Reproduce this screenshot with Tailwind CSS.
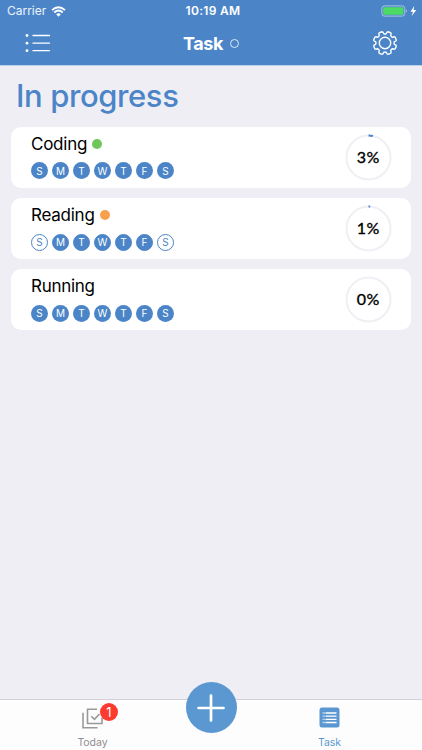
<!DOCTYPE html>
<html lang="en">
<head>
<meta charset="utf-8">
<title>Task</title>
<script src="https://cdn.jsdelivr.net/npm/@tailwindcss/browser@4"></script>
</head>
<body class="w-[422px] h-[750px] overflow-hidden bg-[#efeef5] font-[Inter,'Liberation_Sans',sans-serif] flex flex-col">
<header class="h-[65px] shrink-0 bg-[#4b85c8] text-white shadow-[0_1px_0_#b9cfee]">
  <div class="h-[22px] flex items-center justify-between pl-[7px] pr-[4px]">
    <div class="w-[150px] flex items-center gap-[5px]">
      <span class="text-[12px] leading-[22px] tracking-[-0.02px] text-white/90">Carrier</span>
      <svg width="15" height="11" viewBox="0 0 15 11" fill="none" stroke="#fff" stroke-width="1.900"><path d="M1 4.100Q7.500-1.700 14 4.100M3.300 6.500Q7.500 2.700 11.700 6.500"/><path d="M5.200 8.300Q7.500 6.400 9.800 8.300L7.500 10.700Z" fill="#fff" stroke="none"/></svg>
    </div>
    <span class="pl-[1px] text-[12px] leading-[22px] font-semibold tracking-[0.3px]">10:19 AM</span>
    <div class="w-[150px] flex justify-end items-center">
      <svg width="38" height="12" viewBox="0 0 38 12"><rect x="1.900" y=".9" width="22.800" height="10.200" rx="2.500" fill="none" stroke="#a9c5e5"/><rect x="3.200" y="2.200" width="20.200" height="7.600" rx="1.300" fill="#4cd964"/><path d="M25.900 4.200Q28 6 25.900 7.800Z" fill="#a9c5e5"/><path d="M34.200 1L30.500 6.700h2.500L31.700 11l4.600-5.900h-2.700Z" fill="#fff"/></svg>
    </div>
  </div>
  <div class="h-[43px] flex items-center justify-between pl-[25px] pr-[24px]">
    <svg width="50" height="22" viewBox="0 0 50 22" fill="none" stroke="#fff" stroke-width="1.300" stroke-linecap="round"><path d="M8 2.500h16.500M8 10.200h16.500M8 17.700h16.500"/><g fill="#fff" stroke="none"><circle cx="2" cy="2.500" r="1.400"/><circle cx="2" cy="10.200" r="1.400"/><circle cx="2" cy="17.700" r="1.400"/></g></svg>
    <div class="flex items-center gap-[7px] pr-[1px]">
      <h1 class="text-[18px] leading-[22px] font-bold tracking-[-0.4px]">Task</h1>
      <span class="size-[9px] rounded-full border border-white/80"></span>
    </div>
    <div class="w-[50px] flex justify-end">
      <svg class="-mt-[1px]" width="26" height="26" viewBox="-13 -13 26 26" fill="none" stroke="#fff" stroke-width="1.400" stroke-linejoin="round"><path d="M1.320-9.410Q1.800-11.200 2.810-11.260Q4.600-11 5.970-9.940Q6.500-9 5.720-7.590Q6.200-6.200 7.590-5.720Q9-6.500 9.940-5.970Q11-4.600 11.260-2.810Q11.200-1.800 9.410-1.320Q8.500 0 9.410 1.320Q11.200 1.800 11.260 2.810Q11 4.600 9.940 5.970Q9 6.500 7.590 5.720Q6.200 6.200 5.720 7.590Q6.500 9 5.970 9.940Q4.600 11 2.810 11.260Q1.800 11.200 1.320 9.410Q0 8.500-1.320 9.410Q-1.800 11.200-2.810 11.260Q-4.600 11-5.970 9.940Q-6.500 9-5.720 7.590Q-6.200 6.200-7.590 5.720Q-9 6.500-9.940 5.970Q-11 4.600-11.260 2.810Q-11.200 1.800-9.410 1.320Q-8.500 0-9.410-1.320Q-11.200-1.800-11.260-2.810Q-11-4.600-9.940-5.970Q-9-6.500-7.590-5.720Q-6.200-6.200-5.720-7.590Q-6.500-9-5.970-9.940Q-4.600-11-2.810-11.260Q-1.800-11.200-1.320-9.410Q0-8.500 1.320-9.410Z"/><circle r="5.700"/></svg>
    </div>
  </div>
</header>
<main class="flex-1 px-[11px]">
  <h2 class="h-[62px] pt-[11px] pl-[5px] text-[31px] leading-[40px] font-medium text-[#4b85c8] tracking-[-0.400px]">In progress</h2>
  <div class="flex flex-col gap-[10.500px] pr-[0.500px]">
    <section class="h-[60.700px] rounded-[10px] bg-white flex items-center justify-between pl-[20px] pr-[19px]">
      <div class="flex flex-col">
        <div class="-mt-[1px] flex items-center gap-[5px] h-[23px]"><h3 class="text-[17px] leading-[22px] tracking-[-0.250px] text-black">Coding</h3><span class="size-[10px] rounded-full bg-[#6fc75c]"></span></div>
        <div class="mt-[7px] mb-[2px] flex gap-[4px] text-[10px] leading-none text-white *:size-[17px] *:rounded-full *:bg-[#4b85c8] *:flex *:items-center *:justify-center"><span>S</span><span>M</span><span>T</span><span>W</span><span>T</span><span>F</span><span>S</span></div>
      </div>
      <svg width="47" height="47" viewBox="0 0 47 47" fill="none"><circle cx="23.500" cy="23.500" r="22" stroke="#efeff5" stroke-width="2"/><path d="M23.500 1.500A22 22 0 0 1 27.900 1.950" stroke="#4b85c8" stroke-width="2"/><text x="23" y="29" text-anchor="middle" textLength="22.500" fill="#000" stroke="#000" stroke-width=".35" class="font-[Lato,sans-serif] text-[16px]">3%</text></svg>
    </section>
    <section class="h-[60.700px] rounded-[10px] bg-white flex items-center justify-between pl-[20px] pr-[19px]">
      <div class="flex flex-col">
        <div class="-mt-[1px] flex items-center gap-[5px] h-[23px]"><h3 class="text-[17px] leading-[22px] tracking-[-0.250px] text-black">Reading</h3><span class="size-[10px] rounded-full bg-[#f7a14f]"></span></div>
        <div class="mt-[7px] mb-[2px] flex gap-[4px] text-[10px] leading-none text-white *:size-[17px] *:rounded-full *:border *:border-[#4b85c8] *:flex *:items-center *:justify-center"><span class="text-[#4b85c8]">S</span><span class="bg-[#4b85c8]">M</span><span class="bg-[#4b85c8]">T</span><span class="bg-[#4b85c8]">W</span><span class="bg-[#4b85c8]">T</span><span class="bg-[#4b85c8]">F</span><span class="text-[#4b85c8]">S</span></div>
      </div>
      <svg width="47" height="47" viewBox="0 0 47 47" fill="none"><circle cx="23.500" cy="23.500" r="22" stroke="#efeff5" stroke-width="2"/><path d="M23.500 1.500h1.700" stroke="#4b85c8" stroke-width="2"/><text x="23" y="29" text-anchor="middle" textLength="22.500" fill="#000" stroke="#000" stroke-width=".35" class="font-[Lato,sans-serif] text-[16px]">1%</text></svg>
    </section>
    <section class="h-[60.700px] rounded-[10px] bg-white flex items-center justify-between pl-[20px] pr-[19px]">
      <div class="flex flex-col">
        <div class="-mt-[1px] flex items-center h-[23px]"><h3 class="text-[17px] leading-[22px] tracking-[-0.300px] text-black">Running</h3></div>
        <div class="mt-[7px] mb-[2px] flex gap-[4px] text-[10px] leading-none text-white *:size-[17px] *:rounded-full *:bg-[#4b85c8] *:flex *:items-center *:justify-center"><span>S</span><span>M</span><span>T</span><span>W</span><span>T</span><span>F</span><span>S</span></div>
      </div>
      <svg width="47" height="47" viewBox="0 0 47 47" fill="none"><circle cx="23.500" cy="23.500" r="22" stroke="#efeff5" stroke-width="2"/><text x="23" y="29" text-anchor="middle" textLength="22.500" fill="#000" stroke="#000" stroke-width=".35" class="font-[Lato,sans-serif] text-[16px]">0%</text></svg>
    </section>
  </div>
</main>
<nav class="h-[51px] shrink-0 bg-[#fdfdfd] border-t border-[#d2d1d7] flex justify-between px-[52px] text-[10.500px]">
  <div class="w-[81px] flex flex-col items-center text-[#8e8e93]">
    <div class="relative mt-[8px] h-[21px] w-[21px]">
      <svg width="21" height="21" viewBox="0 0 21 21" fill="none" stroke="#999" stroke-width="1.600"><path d="M20 9.500V15.500H5.500V1.200H15"/><path d="M1 4.700V19.800H15.500"/><path d="M9.300 8.200l3.200 3.200L17.500 6"/></svg>
      <span class="absolute left-[18px] -top-[5px] size-[18px] rounded-full bg-[#fc3a30] text-white text-[13px] leading-[18px] text-center">1</span>
    </div>
    <span class="mt-[7px] leading-[14px] tracking-[-0.050px]">Today</span>
  </div>
  <button class="-mt-[18px] size-[51px] rounded-full bg-[#5b98d2] flex items-center justify-center" aria-label="Add">
    <svg width="28" height="28" viewBox="0 0 28 28" stroke="#fff" stroke-width="2.700" stroke-linecap="round"><path d="M14 1.500v25M1.500 14h25"/></svg>
  </button>
  <div class="w-[81px] flex flex-col items-center text-[#5b98d2]">
    <svg class="mt-[7px]" width="21" height="21" viewBox="0 0 21 21"><rect x=".5" y=".5" width="20" height="20" rx="2.500" fill="#5b98d2"/><path d="M6.500 6H17.500M6.500 9.200H17.500M6.500 12.400H17.500M6.500 15.500H17.500" stroke="#fff" stroke-width="1.300"/><path d="M3.500 6H6M3.500 9.200H6M3.500 12.400H6M3.500 15.500H6" stroke="#b9d3ec" stroke-width="1.300"/></svg>
    <span class="mt-[8px] leading-[14px] tracking-[-0.050px]">Task</span>
  </div>
</nav>
</body>
</html>
